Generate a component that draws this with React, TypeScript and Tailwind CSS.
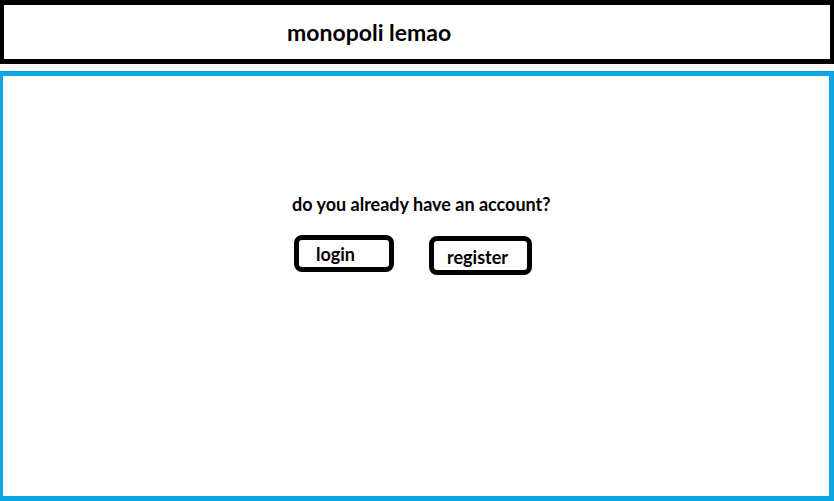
export default function App() {
  return (
    <div className="w-[834px] h-[501px] bg-white flex flex-col overflow-hidden" style={{ fontFamily: 'Lato, "Open Sans", sans-serif' }}>
      <div className="h-[64px] border-[4px] border-t-[5px] border-b-[5px] border-black flex items-center pl-[283px]">
        <span className="text-[23px] font-bold text-black leading-[26px]">monopoli lemao</span>
      </div>
      <div className="mt-[7px] h-[430px] border-[5px] border-l-[3px] border-[#0ea5e4] flex flex-col pl-[289px] pt-[117px]">
        <div className="text-[18px] font-bold text-black leading-[22px]">do you already have an account?</div>
        <div className="flex items-start mt-[20px] ml-[2px]">
          <div className="w-[100px] h-[37px] border-[5px] border-black rounded-[8px] flex items-center pl-[17px] pt-[1px] text-[18px] font-bold text-black">login</div>
          <div className="w-[103px] h-[39px] ml-[35px] mt-[1px] border-[5px] border-black rounded-[8px] flex items-center pl-[13px] pt-[3px] text-[18px] font-bold text-black">register</div>
        </div>
      </div>
    </div>
  );
}
